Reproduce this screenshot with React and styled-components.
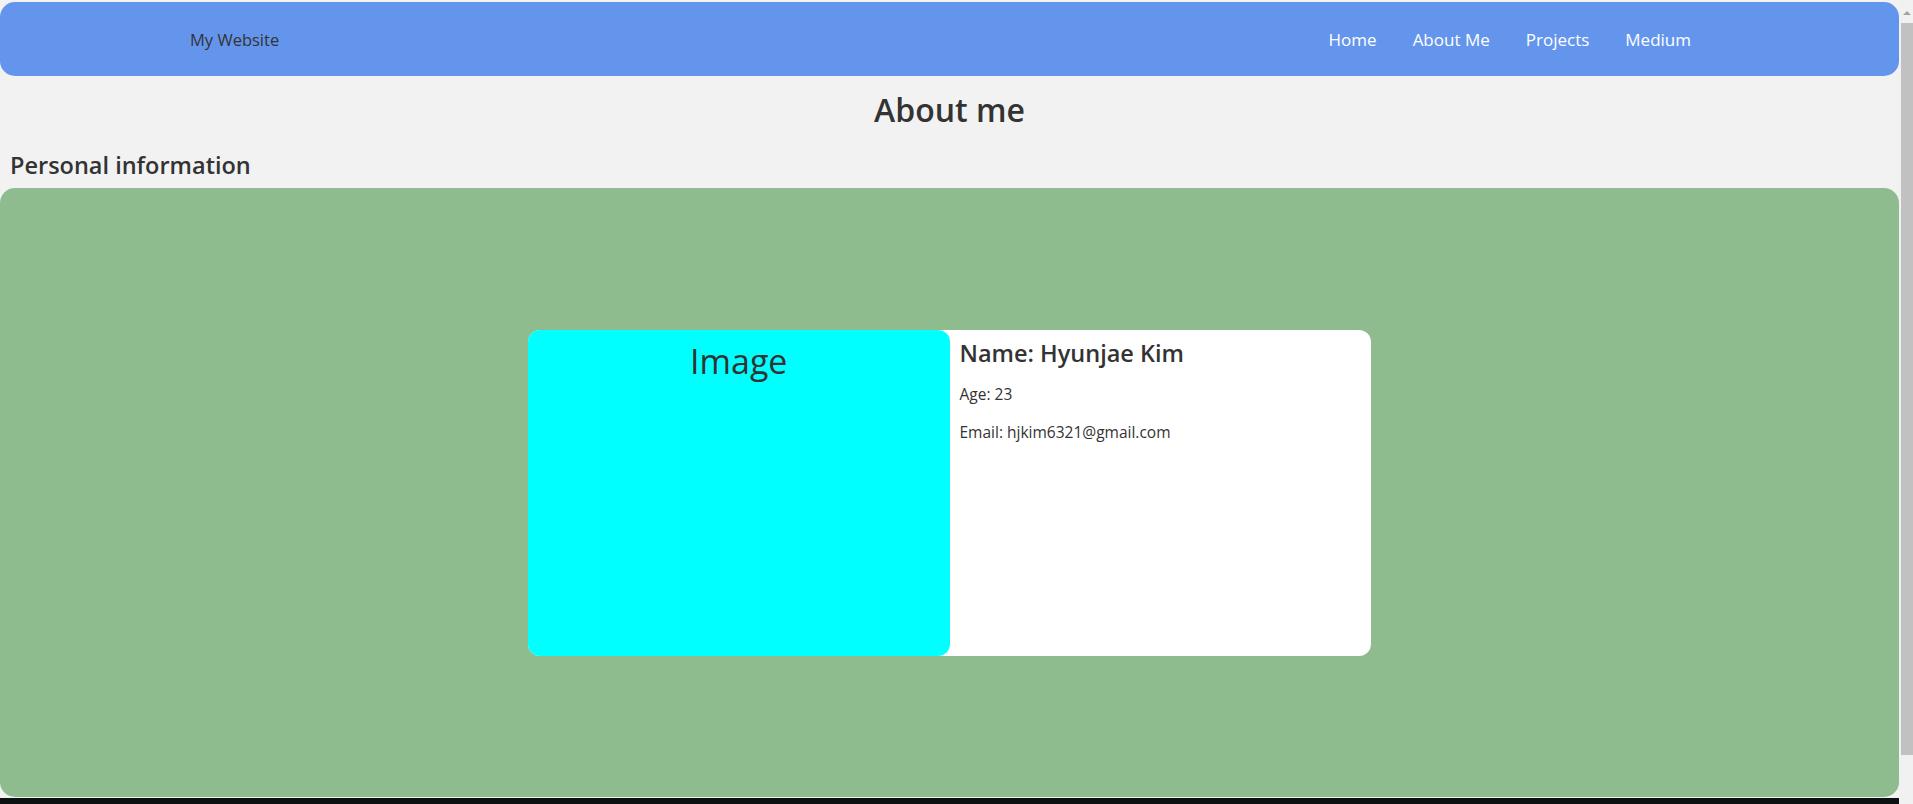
import styled, { createGlobalStyle } from "styled-components";

const GlobalStyle = createGlobalStyle`
  html, body {
    margin: 0;
    padding: 0;
    background: #f2f2f2;
  }
  body {
    font-family: "Open Sans", "Liberation Sans", sans-serif;
    color: #333;
  }
`;

const Page = styled.div`
  display: flex;
  align-items: flex-start;
`;

const Main = styled.main`
  flex: 1;
  min-width: 0;
  padding-top: 2px;
`;

const ScrollTrack = styled.aside`
  display: flex;
  flex-direction: column;
  align-items: center;
  width: 12px;
  height: 804px;
  padding: 11px 0 0 2px;
  box-sizing: border-box;
  width: 14px;
  background: #f1f1f1;
`;

const ArrowUp = styled.div`
  width: 0;
  height: 0;
  border-left: 4px solid transparent;
  border-right: 4px solid transparent;
  border-bottom: 4px solid #a3a3a3;
`;

const Thumb = styled.div`
  align-self: stretch;
  height: 732px;
  margin-top: 8px;
  background: #c1c1c1;
`;

const Nav = styled.nav`
  display: flex;
  align-items: center;
  justify-content: space-between;
  height: 74px;
  padding: 0 190px;
  background: #6495ed;
  border-radius: 15px;
`;

const Brand = styled.div`
  font-size: 16.5px;
  color: #333;
`;

const Links = styled.ul`
  display: flex;
  margin: 0;
  padding: 0;
  list-style: none;
`;

const LinkItem = styled.li`
  a {
    display: block;
    padding: 0 18px;
    color: #fff;
    font-size: 17px;
    text-decoration: none;
  }
`;

const Title = styled.h1`
  margin: 14px 0 0;
  text-align: center;
  font-size: 32px;
  font-weight: 600;
  line-height: 40px;
`;

const SectionTitle = styled.h2`
  margin: 20px 0 0 10px;
  font-size: 23.5px;
  font-weight: 600;
  line-height: 30px;
`;

const Section = styled.section`
  display: flex;
  align-items: center;
  justify-content: center;
  height: 609px;
  margin-top: 8px;
  background: #8fbc8f;
  border-radius: 15px;
`;

const Card = styled.div`
  display: grid;
  grid-template-columns: 1fr 1fr;
  width: 843px;
  height: 326px;
  background: #fff;
  border-radius: 12px;
`;

const ImageBox = styled.div`
  background: #00ffff;
  border-radius: 12px;
  text-align: center;
  padding-top: 8px;
  font-size: 34px;
  font-weight: 500;
  line-height: 46px;
`;

const Info = styled.div`
  padding: 6px 10px;
`;

const Name = styled.h3`
  margin: 0 0 14px;
  font-size: 23.5px;
  font-weight: 600;
  line-height: 34px;
`;

const Line = styled.p`
  margin: 0 0 17px;
  font-size: 15.5px;
  line-height: 21px;
`;

const Footer = styled.footer`
  height: 46px;
  margin-top: 1px;
  background: #0e1111;
`;

const links = ["Home", "About Me", "Projects", "Medium"];

export default function App() {
  return (
    <>
      <GlobalStyle />
      <Page>
        <Main>
          <Nav>
            <Brand>My Website</Brand>
            <Links>
              {links.map((l) => (
                <LinkItem key={l}>
                  <a href="#">{l}</a>
                </LinkItem>
              ))}
            </Links>
          </Nav>
          <Title>About me</Title>
          <SectionTitle>Personal information</SectionTitle>
          <Section>
            <Card>
              <ImageBox>Image</ImageBox>
              <Info>
                <Name>Name: Hyunjae Kim</Name>
                <Line>Age: 23</Line>
                <Line>Email: hjkim6321@gmail.com</Line>
              </Info>
            </Card>
          </Section>
          <Footer />
        </Main>
        <ScrollTrack>
          <ArrowUp />
          <Thumb />
        </ScrollTrack>
      </Page>
    </>
  );
}
